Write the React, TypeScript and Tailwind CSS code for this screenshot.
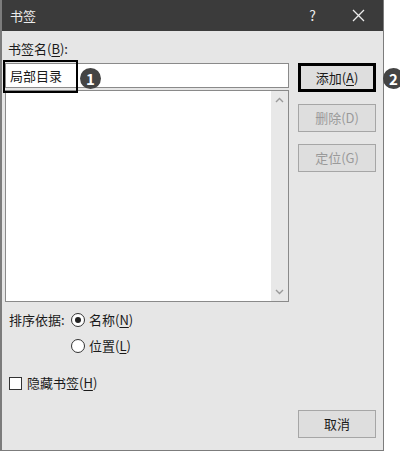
import React from 'react';

const FONT = { fontFamily: '"Microsoft YaHei", "Noto Sans CJK SC", "Noto Sans", sans-serif' };

function Mn({ children }: { children: React.ReactNode }) {
    return <span className="underline underline-offset-2 decoration-1">{children}</span>;
}

function DlgButton({ label, disabled, active, className = '' }: { label: React.ReactNode; disabled?: boolean; active?: boolean; className?: string }) {
    return (
        <div
            className={`w-[78px] h-[28px] flex items-center justify-center text-[13px] bg-[#dedede] ${active ? 'border-[3px] border-black' : 'border border-[#a6a6a6]'} ${disabled ? 'text-[#9a9a9a]' : 'text-[#1a1a1a]'} ${className}`}
        >
            {label}
        </div>
    );
}

function Badge({ n, className }: { n: string; className: string }) {
    return (
        <div className={`absolute w-[21px] h-[21px] rounded-full bg-[#444] text-white text-[15px] font-bold flex items-center justify-center leading-none ${className}`}>
            {n}
        </div>
    );
}

export default function App() {
    return (
        <div className="relative w-[400px] h-[451px] bg-white overflow-hidden" style={FONT}>
            {/* Dialog */}
            <div className="w-[384px] h-[451px] flex flex-col border-l-2 border-r border-b border-[#7c7c7c] bg-[#e6e6e6]">
                {/* Title bar */}
                <div className="h-[31px] shrink-0 bg-[#3b3b3b] flex items-center text-[#ececec] text-[13px]">
                    <span className="ml-[8px]">书签</span>
                    <span className="ml-auto mr-[36px] text-[14px]">?</span>
                    <svg className="mr-[18px]" width="13" height="13" viewBox="0 0 13 13" fill="none" stroke="#ececec" strokeWidth="1.3">
                        <path d="M1 1l11 11M12 1L1 12" />
                    </svg>
                </div>

                {/* Body */}
                <div className="flex-1 flex flex-col pl-[3px] text-[13px] text-[#1a1a1a]">
                    <div className="mt-[9px] ml-[3px] h-[18px] leading-[18px]">
                        书签名(<Mn>B</Mn>):
                    </div>

                    <div className="flex mt-[5px]">
                        {/* Name + list */}
                        <div className="w-[284px] flex flex-col">
                            <div className="h-[25px] bg-white border border-[#8a8a8a] flex items-center pl-[4px]">
                                局部目录
                            </div>
                            <div className="mt-[2px] h-[212px] bg-white border border-[#8a8a8a] flex justify-end">
                                <div className="w-[17px] bg-[#e8e8e8] flex flex-col items-center justify-between py-[6px]">
                                    <svg width="9" height="6" viewBox="0 0 9 6" fill="none" stroke="#9a9a9a" strokeWidth="1.4">
                                        <path d="M1 5l3.5-3.5L8 5" />
                                    </svg>
                                    <svg width="9" height="6" viewBox="0 0 9 6" fill="none" stroke="#9a9a9a" strokeWidth="1.4">
                                        <path d="M1 1l3.5 3.5L8 1" />
                                    </svg>
                                </div>
                            </div>
                        </div>

                        {/* Buttons */}
                        <div className="ml-[9px] flex flex-col gap-[12px]">
                            <DlgButton active label={<>添加(<Mn>A</Mn>)</>} className="h-[29px]" />
                            <DlgButton disabled label={<>删除(D)</>} />
                            <DlgButton disabled label={<>定位(G)</>} />
                        </div>
                    </div>

                    {/* Sort */}
                    <div className="flex mt-[9px] ml-[4px]">
                        <div className="w-[62px] h-[18px] leading-[18px]">排序依据:</div>
                        <div className="flex flex-col gap-[8px]">
                            <div className="flex items-center h-[18px]">
                                <div className="w-[14px] h-[14px] rounded-full border border-[#333] bg-white flex items-center justify-center">
                                    <div className="w-[6px] h-[6px] rounded-full bg-[#222]" />
                                </div>
                                <span className="ml-[4px]">名称(<Mn>N</Mn>)</span>
                            </div>
                            <div className="flex items-center h-[18px]">
                                <div className="w-[14px] h-[14px] rounded-full border border-[#333] bg-white" />
                                <span className="ml-[4px]">位置(<Mn>L</Mn>)</span>
                            </div>
                        </div>
                    </div>

                    {/* Hide checkbox */}
                    <div className="flex items-center mt-[19px] ml-[4px] h-[18px]">
                        <div className="w-[13px] h-[13px] border border-[#333] bg-white" />
                        <span className="ml-[5px]">隐藏书签(<Mn>H</Mn>)</span>
                    </div>

                    {/* Cancel */}
                    <div className="flex justify-end mt-[18px] pr-[7px]">
                        <DlgButton label="取消" />
                    </div>
                </div>
            </div>

            {/* Annotations */}
            <div className="absolute left-[3px] top-[60px] w-[75px] h-[33px] border-2 border-black" />
            <Badge n="1" className="left-[80px] top-[68px]" />
            <Badge n="2" className="left-[383px] top-[68px]" />
        </div>
    );
}
